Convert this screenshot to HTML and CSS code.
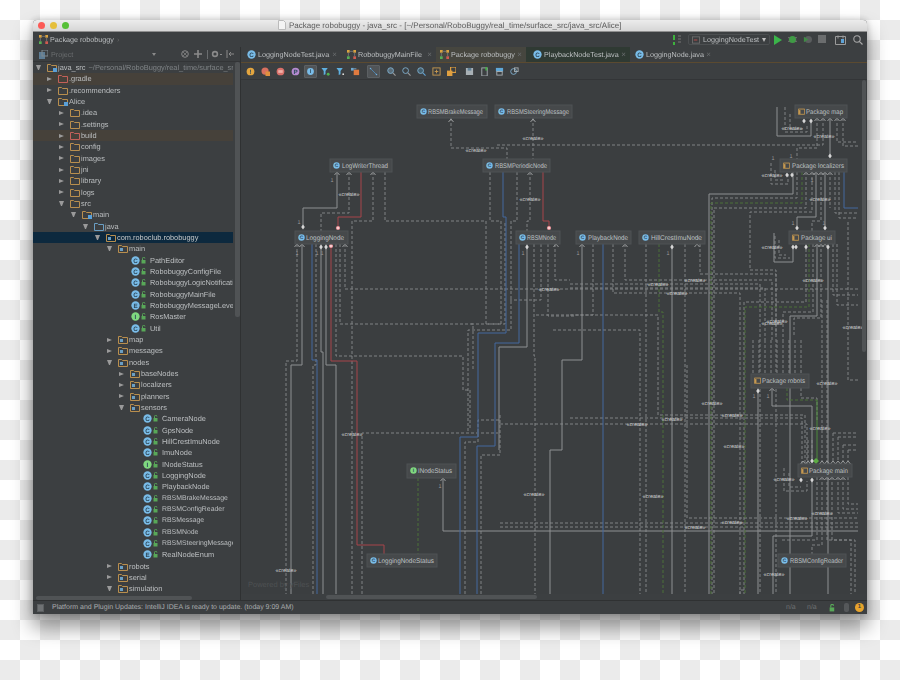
FILE: index.html
```html
<!DOCTYPE html>
<html lang="en">
<head>
<meta charset="utf-8">
<title>Package robobuggy</title>
<link rel="stylesheet" href="styles.css">
</head>
<body>
<svg class="defs" width="0" height="0" aria-hidden="true">
  <defs>
    <symbol id="folder" viewBox="0 0 10 9"><path d="M.5 1.5h3l1 1h5v6h-9z" fill="none" stroke="#b98f4e"/><rect x="2" y="4" width="3" height="3" fill="#6a9fc4"/></symbol>
    <symbol id="folder-red" viewBox="0 0 10 9"><path d="M.5 1.5h3l1 1h5v6h-9z" fill="none" stroke="#c4605a"/></symbol>
    <symbol id="folder-plain" viewBox="0 0 10 9"><path d="M.5 1.5h3l1 1h5v6h-9z" fill="none" stroke="#b98f4e"/></symbol>
    <symbol id="folder-src" viewBox="0 0 10 9"><path d="M.5 1.5h3l1 1h5v6h-9z" fill="none" stroke="#6a9fc4"/></symbol>
    <symbol id="folder-mod" viewBox="0 0 10 9"><path d="M.5 1.5h3l1 1h5v6h-9z" fill="none" stroke="#b98f4e"/><rect x="6" y="5" width="4" height="4" fill="#5aa0d8"/></symbol>
    <symbol id="cls" viewBox="0 0 10 10"><circle cx="5" cy="5" r="4.6" fill="#79bce8"/><text x="5" y="7.4" text-anchor="middle" class="gl">C</text></symbol>
    <symbol id="enm" viewBox="0 0 10 10"><circle cx="5" cy="5" r="4.6" fill="#79bce8"/><text x="5" y="7.4" text-anchor="middle" class="gl">E</text></symbol>
    <symbol id="ifc" viewBox="0 0 10 10"><circle cx="5" cy="5" r="4.6" fill="#7fd87f"/><text x="5" y="7.4" text-anchor="middle" class="gl">I</text></symbol>
    <symbol id="lock" viewBox="0 0 6 7"><rect x=".5" y="3" width="4" height="3.5" fill="#58a858"/><path d="M1.5 3V1.5a1.2 1.2 0 0 1 2.4 0" fill="none" stroke="#58a858"/></symbol>
    <symbol id="pkg" viewBox="0 0 10 9"><path d="M.5 1h9v7.5h-9z" fill="none" stroke="#c89a50" stroke-width="1.2"/><rect x="1" y="2.5" width="2.5" height="5.5" fill="#c89a50"/></symbol>
    <symbol id="graph" viewBox="0 0 10 10"><rect width="3" height="3" fill="#d9a33f"/><rect x="7" width="3" height="3" fill="#d9a33f"/><rect y="7" width="3" height="3" fill="#55b055"/><rect x="7" y="7" width="3" height="3" fill="#d05a50"/><path d="M3 1.5h4M1.5 3v4M8.5 3v4" stroke="#777"/></symbol>
    <g id="tick"><path d="M-2.5 3 0 0 2.5 3" fill="none" stroke="#9a9c9d"/></g>
    <g id="dia"><path d="M0-2.5 1.8 0 0 2.5-1.8 0z" fill="#d5d5d5"/></g>
    <g id="pin"><circle r="2.1" fill="#f09aa0"/><path d="M-1 0h2M0-1v2" stroke="#fff" stroke-width=".6"/></g>
  </defs>
</svg>

<div class="window">
  <header class="titlebar">
    <div class="lights"><i class="light l-red"></i><i class="light l-yellow"></i><i class="light l-green"></i></div>
    <div class="title"><svg class="doc" width="8" height="10" viewBox="0 0 8 10"><path d="M.5.5h5l2 2v7h-7z" fill="#f4f4f4" stroke="#bbb"/></svg><span>Package robobuggy - java_src - [~/Personal/RoboBuggy/real_time/surface_src/java_src/Alice]</span></div>
  </header>

  <nav class="navbar">
    <div class="crumb"><svg class="ic9"><use href="#graph"/></svg><span>Package robobuggy</span><b class="crumb-sep">›</b></div>
    <div class="run">
      <svg class="ic-build" width="10" height="10" viewBox="0 0 10 10"><path d="M2 0v5M2 7v3" stroke="#3db23d" stroke-width="2"/><path d="M6 1h3M6 4h3M6 7h3" stroke="#777" stroke-width="1.2"/></svg>
      <div class="runcfg"><svg width="9" height="8" viewBox="0 0 9 8"><rect x=".5" y=".5" width="8" height="7" fill="#3a3d3f" stroke="#6d6d6d"/><path d="M2 4h4" stroke="#c05050"/></svg><span>LoggingNodeTest</span><i class="caret"></i></div>
      <svg width="9" height="10" viewBox="0 0 9 10"><path d="M1 0l8 5-8 5z" fill="#3bb54a"/></svg>
      <svg width="9" height="9" viewBox="0 0 10 10"><circle cx="5" cy="5" r="4" fill="#3f9a45"/><path d="M0 3h2M0 7h2M8 3h2M8 7h2" stroke="#777"/></svg>
      <svg width="9" height="9" viewBox="0 0 10 10"><circle cx="6" cy="5" r="4" fill="#5a5d5e"/><path d="M1 2l5 3-5 3z" fill="#3f8a45"/></svg>
      <svg width="9" height="9" viewBox="0 0 9 9"><rect width="8" height="8" fill="#6b6d6e"/></svg>
      <svg class="ic-struct" width="11" height="10" viewBox="0 0 11 10"><path d="M.5 1.5h10v8H.5z" fill="none" stroke="#9a9a9a"/><path d="M3 .5v3M8 .5v3" stroke="#9a9a9a"/><rect x="6" y="4" width="3" height="4" fill="#5fa4d8"/></svg>
      <svg class="ic-search" width="10" height="10" viewBox="0 0 10 10"><circle cx="4" cy="4" r="3.2" fill="none" stroke="#a8a8a8" stroke-width="1.1"/><path d="M6.3 6.3 9.5 9.5" stroke="#a8a8a8" stroke-width="1.2"/></svg>
    </div>
  </nav>

  <div class="main">
    <aside class="sidebar">
      <div class="tool-header">
        <svg class="ic9" viewBox="0 0 9 9"><rect y="2" width="6" height="7" fill="#5d7d95"/><rect x="3" width="6" height="6" fill="none" stroke="#7f8a90"/></svg>
        <span class="tool-name">Project</span>
        <i class="tool-caret"></i>
        <div class="tool-icons">
          <svg width="8" height="8" viewBox="0 0 8 8"><circle cx="4" cy="4" r="3.3" fill="none" stroke="#8a8a8a"/><path d="M2 2l4 4M6 2 2 6" stroke="#8a8a8a" stroke-width=".7"/></svg>
          <svg width="8" height="8" viewBox="0 0 8 8"><path d="M4 0v8M0 4h8" stroke="#8a8a8a" stroke-width="1.6"/></svg>
          <i class="tool-sep"></i>
          <svg width="8" height="8" viewBox="0 0 8 8"><circle cx="4" cy="4" r="2.4" fill="none" stroke="#8a8a8a" stroke-width="1.6"/></svg>
          <i class="tool-dash"></i>
          <svg width="8" height="8" viewBox="0 0 8 8"><path d="M1 0v8M3 4h5M3 4l2-2M3 4l2 2" stroke="#8a8a8a" fill="none"/></svg>
        </div>
      </div>
      <ul class="tree">
        <li class="row l0"><i class="tw open"></i><svg class="fi"><use href="#folder-mod"/></svg><span>java_src</span><em>~/Personal/RoboBuggy/real_time/surface_src/java_src</em></li>
        <li class="row l1 hl"><i class="tw"></i><svg class="fi"><use href="#folder-red"/></svg><span>.gradle</span></li>
        <li class="row l1"><i class="tw"></i><svg class="fi"><use href="#folder-plain"/></svg><span>.recommenders</span></li>
        <li class="row l1"><i class="tw open"></i><svg class="fi"><use href="#folder-mod"/></svg><span>Alice</span></li>
        <li class="row l2"><i class="tw"></i><svg class="fi"><use href="#folder-plain"/></svg><span>.idea</span></li>
        <li class="row l2"><i class="tw"></i><svg class="fi"><use href="#folder-plain"/></svg><span>.settings</span></li>
        <li class="row l2 hl"><i class="tw"></i><svg class="fi"><use href="#folder-red"/></svg><span>build</span></li>
        <li class="row l2"><i class="tw"></i><svg class="fi"><use href="#folder-plain"/></svg><span>config</span></li>
        <li class="row l2"><i class="tw"></i><svg class="fi"><use href="#folder-plain"/></svg><span>images</span></li>
        <li class="row l2"><i class="tw"></i><svg class="fi"><use href="#folder-plain"/></svg><span>jni</span></li>
        <li class="row l2"><i class="tw"></i><svg class="fi"><use href="#folder-plain"/></svg><span>library</span></li>
        <li class="row l2"><i class="tw"></i><svg class="fi"><use href="#folder-plain"/></svg><span>logs</span></li>
        <li class="row l2"><i class="tw open"></i><svg class="fi"><use href="#folder-plain"/></svg><span>src</span></li>
        <li class="row l3"><i class="tw open"></i><svg class="fi"><use href="#folder-mod"/></svg><span>main</span></li>
        <li class="row l4"><i class="tw open"></i><svg class="fi"><use href="#folder-src"/></svg><span>java</span></li>
        <li class="row l5 sel"><i class="tw open"></i><svg class="fi"><use href="#folder"/></svg><span>com.roboclub.robobuggy</span></li>
        <li class="row l6"><i class="tw open"></i><svg class="fi"><use href="#folder"/></svg><span>main</span></li>
        <li class="row l7"><i class="tw none"></i><svg class="ci"><use href="#cls"/></svg><svg class="lk"><use href="#lock"/></svg><span>PathEditor</span></li>
        <li class="row l7"><i class="tw none"></i><svg class="ci"><use href="#cls"/></svg><svg class="lk"><use href="#lock"/></svg><span>RobobuggyConfigFile</span></li>
        <li class="row l7"><i class="tw none"></i><svg class="ci"><use href="#cls"/></svg><svg class="lk"><use href="#lock"/></svg><span>RobobuggyLogicNotification</span></li>
        <li class="row l7"><i class="tw none"></i><svg class="ci"><use href="#cls"/></svg><svg class="lk"><use href="#lock"/></svg><span>RobobuggyMainFile</span></li>
        <li class="row l7"><i class="tw none"></i><svg class="ci"><use href="#enm"/></svg><svg class="lk"><use href="#lock"/></svg><span>RobobuggyMessageLevel</span></li>
        <li class="row l7"><i class="tw none"></i><svg class="ci"><use href="#ifc"/></svg><svg class="lk"><use href="#lock"/></svg><span>RosMaster</span></li>
        <li class="row l7"><i class="tw none"></i><svg class="ci"><use href="#cls"/></svg><svg class="lk"><use href="#lock"/></svg><span>Util</span></li>
        <li class="row l6"><i class="tw"></i><svg class="fi"><use href="#folder"/></svg><span>map</span></li>
        <li class="row l6"><i class="tw"></i><svg class="fi"><use href="#folder"/></svg><span>messages</span></li>
        <li class="row l6"><i class="tw open"></i><svg class="fi"><use href="#folder"/></svg><span>nodes</span></li>
        <li class="row l7"><i class="tw"></i><svg class="fi"><use href="#folder"/></svg><span>baseNodes</span></li>
        <li class="row l7"><i class="tw"></i><svg class="fi"><use href="#folder"/></svg><span>localizers</span></li>
        <li class="row l7"><i class="tw"></i><svg class="fi"><use href="#folder"/></svg><span>planners</span></li>
        <li class="row l7"><i class="tw open"></i><svg class="fi"><use href="#folder"/></svg><span>sensors</span></li>
        <li class="row l8"><i class="tw none"></i><svg class="ci"><use href="#cls"/></svg><svg class="lk"><use href="#lock"/></svg><span>CameraNode</span></li>
        <li class="row l8"><i class="tw none"></i><svg class="ci"><use href="#cls"/></svg><svg class="lk"><use href="#lock"/></svg><span>GpsNode</span></li>
        <li class="row l8"><i class="tw none"></i><svg class="ci"><use href="#cls"/></svg><svg class="lk"><use href="#lock"/></svg><span>HillCrestImuNode</span></li>
        <li class="row l8"><i class="tw none"></i><svg class="ci"><use href="#cls"/></svg><svg class="lk"><use href="#lock"/></svg><span>ImuNode</span></li>
        <li class="row l8"><i class="tw none"></i><svg class="ci"><use href="#ifc"/></svg><svg class="lk"><use href="#lock"/></svg><span>INodeStatus</span></li>
        <li class="row l8"><i class="tw none"></i><svg class="ci"><use href="#cls"/></svg><svg class="lk"><use href="#lock"/></svg><span>LoggingNode</span></li>
        <li class="row l8"><i class="tw none"></i><svg class="ci"><use href="#cls"/></svg><svg class="lk"><use href="#lock"/></svg><span>PlaybackNode</span></li>
        <li class="row l8"><i class="tw none"></i><svg class="ci"><use href="#cls"/></svg><svg class="lk"><use href="#lock"/></svg><span class="cap">RBSMBrakeMessage</span></li>
        <li class="row l8"><i class="tw none"></i><svg class="ci"><use href="#cls"/></svg><svg class="lk"><use href="#lock"/></svg><span class="cap">RBSMConfigReader</span></li>
        <li class="row l8"><i class="tw none"></i><svg class="ci"><use href="#cls"/></svg><svg class="lk"><use href="#lock"/></svg><span class="cap">RBSMessage</span></li>
        <li class="row l8"><i class="tw none"></i><svg class="ci"><use href="#cls"/></svg><svg class="lk"><use href="#lock"/></svg><span class="cap">RBSMNode</span></li>
        <li class="row l8"><i class="tw none"></i><svg class="ci"><use href="#cls"/></svg><svg class="lk"><use href="#lock"/></svg><span class="cap">RBSMSteeringMessage</span></li>
        <li class="row l8"><i class="tw none"></i><svg class="ci"><use href="#enm"/></svg><svg class="lk"><use href="#lock"/></svg><span>RealNodeEnum</span></li>
        <li class="row l6"><i class="tw"></i><svg class="fi"><use href="#folder"/></svg><span>robots</span></li>
        <li class="row l6"><i class="tw"></i><svg class="fi"><use href="#folder"/></svg><span>serial</span></li>
        <li class="row l6"><i class="tw open"></i><svg class="fi"><use href="#folder"/></svg><span>simulation</span></li>
      </ul>
      <div class="tree-vbar"></div>
      <div class="tree-hbar"></div>
    </aside>

    <section class="editor">
      <div class="tabs">
        <div class="tab t1"><svg class="ci"><use href="#cls"/></svg><span>LoggingNodeTest.java</span><u>×</u></div>
        <div class="tab t2"><svg class="ci"><use href="#graph"/></svg><span>RobobuggyMainFile</span><u>×</u></div>
        <div class="tab t3"><svg class="ci"><use href="#graph"/></svg><span>Package robobuggy</span><u>×</u></div>
        <div class="tab t4"><svg class="ci"><use href="#cls"/></svg><span>PlaybackNodeTest.java</span><u>×</u></div>
        <div class="tab t5"><svg class="ci"><use href="#cls"/></svg><span>LoggingNode.java</span><u>×</u></div>
      </div>
      <div class="toolbar">
        <svg viewBox="0 0 10 10"><circle cx="5" cy="5" r="4.3" fill="#e3a53f"/><text x="5" y="7.5" text-anchor="middle" class="gl">!</text></svg>
        <svg viewBox="0 0 10 10"><circle cx="4.5" cy="4.5" r="4" fill="#d8705f"/><rect x="5" y="5" width="5" height="5" fill="#e0903f"/></svg>
        <svg viewBox="0 0 10 10"><circle cx="5" cy="5" r="4.3" fill="#d8706a"/><rect x="2.5" y="3.5" width="5" height="3" fill="#f0b0a8"/></svg>
        <svg viewBox="0 0 10 10"><circle cx="5" cy="5" r="4.3" fill="#b58ad0"/><text x="5" y="7.5" text-anchor="middle" class="gl">P</text></svg>
        <svg class="on" viewBox="-2 -2 14 14"><circle cx="5" cy="5" r="4.3" fill="#79bce8"/><text x="5" y="7.5" text-anchor="middle" class="gl">I</text></svg>
        <svg viewBox="0 0 10 10"><path d="M.5 1h7L5 4.5V8L3 9V4.5z" fill="#5fb0e0"/><circle cx="8" cy="8" r="1.6" fill="#4fb04f"/></svg>
        <svg viewBox="0 0 10 10"><path d="M.5 1h7L5 4.5V8L3 9V4.5z" fill="#5fb0e0"/><circle cx="8" cy="8" r="1" fill="#ddd"/></svg>
        <svg viewBox="0 0 10 10"><rect x="3" y="3" width="6" height="6" fill="#e07a3f"/><rect x="0" y="1" width="3" height="3" fill="#6fa8d0"/><path d="M3 2h3" stroke="#6fa8d0"/></svg>
        <svg class="on wide" viewBox="-2 -2 14 14"><path d="M1 1l8 8" stroke="#4f8fc0"/><circle cx="1.2" cy="1.2" r="1" fill="#6fb0e0"/><circle cx="8.8" cy="8.8" r="1" fill="#6fb0e0"/></svg>
        <svg viewBox="0 0 10 10"><circle cx="4" cy="4" r="3.2" fill="#5b6d78" stroke="#7fb0d0"/><path d="M6.5 6.5 9.5 9.5" stroke="#9a9a9a" stroke-width="1.3"/></svg>
        <svg viewBox="0 0 10 10"><circle cx="4" cy="4" r="3.2" fill="none" stroke="#7fb0d0"/><path d="M6.5 6.5 9.5 9.5" stroke="#9a9a9a" stroke-width="1.3"/></svg>
        <svg viewBox="0 0 10 10"><circle cx="4" cy="4" r="3.2" fill="#44606f" stroke="#7fb0d0"/><path d="M6.5 6.5 9.5 9.5" stroke="#5fa0d0" stroke-width="1.3"/></svg>
        <svg viewBox="0 0 10 10"><rect x="1" y="1" width="8" height="8" fill="none" stroke="#c89a50"/><path d="M3 5h4M5 3v4" stroke="#c89a50"/></svg>
        <svg class="gap" viewBox="0 0 10 10"><rect x="0" y="4" width="6" height="6" fill="#e0a040"/><rect x="4" y="0" width="6" height="6" fill="none" stroke="#e0a040" stroke-width="1.3"/></svg>
        <svg viewBox="0 0 10 10"><path d="M1 1h8v8H1z" fill="#a8b0b5"/><rect x="3" y="1" width="4" height="3" fill="#5f7f95"/></svg>
        <svg viewBox="0 0 10 10"><rect x="2" y="1" width="6" height="9" fill="none" stroke="#a8b0b5"/><path d="M7 0v4" stroke="#45b048" stroke-width="2"/></svg>
        <svg viewBox="0 0 10 10"><rect x="1" y="1" width="8" height="4" fill="#5fa8d8"/><rect x="2" y="5" width="6" height="4" fill="none" stroke="#a8b0b5"/></svg>
        <svg viewBox="0 0 10 10"><circle cx="4" cy="5" r="3.2" fill="none" stroke="#7fb0d0"/><rect x="5" y="1" width="4" height="4" fill="none" stroke="#a8b0b5"/></svg>
      </div>

      <div class="canvas">
        <svg class="diagram" viewBox="241 80 622 514">
          <g class="dash">
            <path d="M349 172V213H321V231"/>
            <path d="M373 172V221H352V594"/>
            <path d="M385 172V221H486V324H505V221"/>
            <path d="M490 172V221H501V324H470"/>
            <path d="M517 172V221H511V330H468V433"/>
            <path d="M530 172V221H527V231"/>
            <path d="M451 118V148H507V159"/>
            <path d="M533 118V159"/>
            <path d="M297 244V361H286V594"/>
            <path d="M316 244V365H313V594"/>
            <path d="M336 244V356H463V390H470V430"/>
            <path d="M340 244V324H473V370"/>
            <path d="M345 244V289H858"/>
            <path d="M362 594V433H498"/>
            <path d="M465 594V442H478V420H500"/>
            <path d="M481 594V455H500V414"/>
            <path d="M534 244V356H535V594"/>
            <path d="M541 244V300H510"/>
            <path d="M548 244V316H575"/>
            <path d="M555 244V280H570"/>
            <path d="M593 244V315H534"/>
            <path d="M553 330H640V594"/>
            <path d="M613 244V293H740V594"/>
            <path d="M625 244V280H772V340"/>
            <path d="M646 244V594"/>
            <path d="M685 244V594"/>
            <path d="M570 284H760V594"/>
            <path d="M570 288H765V340"/>
            <path d="M700 244V274H776V335"/>
            <path d="M570 315H658V415H805V464"/>
            <path d="M570 418H802V464"/>
            <path d="M500 424H807V464"/>
            <path d="M687 365V518H858"/>
            <path d="M500 523H858"/>
            <path d="M500 527H858"/>
            <path d="M817 118V148H797V159"/>
            <path d="M823 118V145H495"/>
            <path d="M837 118V142H858"/>
            <path d="M843 118V146H858"/>
            <path d="M785 107V132H807V124"/>
            <path d="M790 114V129H804"/>
            <path d="M797 172V198H712V594"/>
            <path d="M806 172V208H714V594"/>
            <path d="M812 172V212H750V270H776V594"/>
            <path d="M821 172V221H812V231"/>
            <path d="M830 172V208"/>
            <path d="M835 172V213H858"/>
            <path d="M839 172V218H858"/>
            <path d="M848 222V380H858"/>
            <path d="M771 163V184H788V172"/>
            <path d="M775 170V180H785"/>
            <path d="M806 244V302H744V594"/>
            <path d="M813 244V312H783V340"/>
            <path d="M821 244V318H794V335"/>
            <path d="M833 244V295H858"/>
            <path d="M837 244V305H858"/>
            <path d="M775 236V258H790"/>
            <path d="M779 240V255H786"/>
            <path d="M753 340V374M759 340V374M765 340V374M771 340V374M777 340V374M783 340V374M789 340V374M795 340V374M801 340V374"/>
            <path d="M801 388V398H817V420"/>
            <path d="M808 440V462M812 440V462M822 300V462M827 300V462M833 433H858M833 433V462M838 437H858M838 437V462M843 445H858M843 445V462M848 450H858M848 450V462"/>
            <path d="M784 468V491H807V481"/>
            <path d="M789 473V487H801"/>
            <path d="M817 477V540H780"/>
            <path d="M822 477V545H812V554"/>
            <path d="M827 477V540H851V594"/>
            <path d="M832 477V540H855V594"/>
            <path d="M838 477V513H858"/>
            <path d="M843 477V509H858"/>
            <path d="M848 477V504H858"/>
            <path d="M740 594V590H745"/>
          </g>
          <g class="solid">
            <path d="M337 172V208H303V228"/>
            <path d="M302 244V365H291V594"/>
            <path d="M321 244V352H323V594"/>
            <path d="M326 244V365H336V594"/>
            <path d="M527 244V347H499V450"/>
            <path d="M582 244V360H562V450H550V594"/>
            <path d="M672 244V594"/>
            <path d="M777 107V136H811V122"/>
            <path d="M830 118V155"/>
            <path d="M793 172V194H709V594"/>
            <path d="M816 172V217H797V226"/>
            <path d="M825 172V226"/>
            <path d="M817 244V316H790V594"/>
            <path d="M828 244V594"/>
            <path d="M774 233V262H793V247"/>
            <path d="M758 388V594"/>
            <path d="M772 388V406H812V462"/>
            <path d="M812 481V536H773V594"/>
            <path d="M443 478V531H858"/>
          </g>
          <g class="blue">
            <path d="M312 244V360H317V594"/>
            <path d="M503 172V217H506V333H478V437H460V594"/>
            <path d="M519 244V343H495V446H477V594"/>
            <path d="M603 244V594"/>
            <path d="M844 172V208H858"/>
          </g>
          <g class="redline">
            <path d="M361 172V217H338V228"/>
            <path d="M543 172V221H549V228"/>
            <path d="M331 244V361H357V545H384V554"/>
          </g>
          <g class="greenline">
            <path d="M418 478V554"/>
            <path d="M659 244V312H663V594"/>
            <path d="M802 172V203H711V594"/>
            <path d="M809 244V307H745V594"/>
            <path d="M787 388V400H817"/>
          </g>
          <path class="green-solid" d="M817 400V460"/>
          <path class="green-head" d="M418 473l-2.5 4.5h5z"/>
          <path class="green-head" d="M816 458l-3 3 3 3 3-3z"/>

          <use href="#tick" x="451" y="119"/><use href="#tick" x="533" y="119"/>
          <use href="#tick" x="337" y="172"/><use href="#tick" x="349" y="172"/><use href="#tick" x="373" y="172"/><use href="#tick" x="530" y="172"/>
          <use href="#tick" x="297" y="244"/><use href="#tick" x="302" y="244"/><use href="#tick" x="345" y="244"/><use href="#tick" x="556" y="244"/>
          <use href="#tick" x="582" y="244"/><use href="#tick" x="625" y="244"/><use href="#tick" x="697" y="244"/><use href="#tick" x="443" y="478"/><use href="#tick" x="772" y="388"/>
          <use href="#tick" x="817" y="118"/><use href="#tick" x="823" y="118"/><use href="#tick" x="830" y="118"/><use href="#tick" x="837" y="118"/><use href="#tick" x="843" y="118"/>
          <use href="#tick" x="806" y="172"/><use href="#tick" x="812" y="172"/><use href="#tick" x="816" y="172"/><use href="#tick" x="821" y="172"/><use href="#tick" x="825" y="172"/><use href="#tick" x="830" y="172"/>
          <use href="#tick" x="817" y="244"/><use href="#tick" x="821" y="244"/><use href="#tick" x="825" y="244"/>
          <use href="#tick" x="803" y="461"/><use href="#tick" x="808" y="461"/><use href="#tick" x="822" y="461"/><use href="#tick" x="827" y="461"/><use href="#tick" x="833" y="461"/><use href="#tick" x="838" y="461"/><use href="#tick" x="843" y="461"/><use href="#tick" x="848" y="461"/>
          <use href="#tick" x="822" y="477"/><use href="#tick" x="827" y="477"/><use href="#tick" x="832" y="477"/><use href="#tick" x="838" y="477"/><use href="#tick" x="843" y="477"/>

          <use href="#dia" x="303" y="227"/><use href="#dia" x="321" y="247"/><use href="#dia" x="326" y="247"/><use href="#dia" x="527" y="247"/><use href="#dia" x="672" y="247"/>
          <use href="#dia" x="804" y="121"/><use href="#dia" x="811" y="121"/><use href="#dia" x="830" y="156"/><use href="#dia" x="787" y="175"/><use href="#dia" x="792" y="175"/><use href="#dia" x="797" y="228"/><use href="#dia" x="825" y="228"/>
          <use href="#dia" x="793" y="247"/><use href="#dia" x="796" y="247"/><use href="#dia" x="806" y="247"/><use href="#dia" x="828" y="247"/><use href="#dia" x="758" y="391"/><use href="#dia" x="812" y="461"/><use href="#dia" x="801" y="480"/><use href="#dia" x="812" y="480"/>
          <use href="#pin" x="338" y="228"/><use href="#pin" x="549" y="228"/><use href="#pin" x="331" y="246"/>

          <g class="lbl">
            <text x="476" y="152">«create»</text><text x="533" y="140">«create»</text><text x="349" y="196">«create»</text><text x="530" y="201">«create»</text><text x="549" y="291">«create»</text>
            <text x="695" y="282">«create»</text><text x="658" y="286">«create»</text><text x="677" y="295">«create»</text><text x="813" y="282">«create»</text><text x="777" y="323">«create»</text><text x="772" y="325">«create»</text><text x="853" y="329">«create»</text>
            <text x="824" y="138">«create»</text><text x="792" y="130">«create»</text><text x="772" y="177">«create»</text><text x="820" y="201">«create»</text><text x="772" y="249">«create»</text>
            <text x="827" y="385">«create»</text><text x="712" y="405">«create»</text><text x="732" y="417">«create»</text><text x="672" y="421">«create»</text><text x="637" y="426">«create»</text><text x="820" y="430">«create»</text><text x="734" y="448">«create»</text><text x="653" y="498">«create»</text>
            <text x="784" y="481">«create»</text><text x="822" y="515">«create»</text><text x="797" y="520">«create»</text><text x="732" y="524">«create»</text><text x="695" y="529">«create»</text><text x="774" y="576">«create»</text>
            <text x="534" y="496">«create»</text><text x="352" y="436">«create»</text><text x="286" y="572">«create»</text>
          </g>
          <g class="num">
            <text x="332" y="182">1</text><text x="299" y="224">1</text><text x="297" y="255">1</text><text x="317" y="255">1</text><text x="322" y="255">1</text><text x="523" y="255">1</text><text x="578" y="255">1</text><text x="668" y="255">1</text>
            <text x="440" y="488">1</text><text x="754" y="398">1</text><text x="768" y="398">1</text><text x="791" y="158">1</text><text x="773" y="160">1</text><text x="793" y="225">1</text><text x="824" y="225">1</text><text x="812" y="182">1</text>
          </g>

          <g class="node">
            <rect x="417" y="105" width="70" height="13"/><use href="#cls" x="420" y="108" width="7" height="7"/><text x="428" y="114" textLength="55" lengthAdjust="spacingAndGlyphs">RBSMBrakeMessage</text>
            <rect x="495" y="105" width="77" height="13"/><use href="#cls" x="498" y="108" width="7" height="7"/><text x="507" y="114" textLength="62" lengthAdjust="spacingAndGlyphs">RBSMSteeringMessage</text>
            <rect x="330" y="159" width="62" height="13"/><use href="#cls" x="333" y="162" width="7" height="7"/><text x="342" y="168" textLength="46" lengthAdjust="spacingAndGlyphs">LogWriterThread</text>
            <rect x="483" y="159" width="67" height="13"/><use href="#cls" x="486" y="162" width="7" height="7"/><text x="495" y="168" textLength="52" lengthAdjust="spacingAndGlyphs">RBSMPeriodicNode</text>
            <rect x="295" y="231" width="53" height="13"/><use href="#cls" x="298" y="234" width="7" height="7"/><text x="306" y="240" textLength="38" lengthAdjust="spacingAndGlyphs">LoggingNode</text>
            <rect x="516" y="231" width="44" height="13"/><use href="#cls" x="519" y="234" width="7" height="7"/><text x="527" y="240" textLength="29" lengthAdjust="spacingAndGlyphs">RBSMNode</text>
            <rect x="576" y="231" width="55" height="13"/><use href="#cls" x="579" y="234" width="7" height="7"/><text x="588" y="240" textLength="40" lengthAdjust="spacingAndGlyphs">PlaybackNode</text>
            <rect x="639" y="231" width="66" height="13"/><use href="#cls" x="642" y="234" width="7" height="7"/><text x="651" y="240" textLength="51" lengthAdjust="spacingAndGlyphs">HillCrestImuNode</text>
            <rect x="407" y="464" width="49" height="14"/><use href="#ifc" x="410" y="467" width="7" height="7"/><text x="418" y="473" textLength="34" lengthAdjust="spacingAndGlyphs">INodeStatus</text>
            <rect x="367" y="554" width="70" height="13"/><use href="#cls" x="370" y="557" width="7" height="7"/><text x="378" y="563" textLength="56" lengthAdjust="spacingAndGlyphs">LoggingNodeStatus</text>
            <rect x="778" y="554" width="68" height="13"/><use href="#cls" x="781" y="557" width="7" height="7"/><text x="790" y="563" textLength="53" lengthAdjust="spacingAndGlyphs">RBSMConfigReader</text>
            <rect x="795" y="105" width="52" height="13"/><use href="#pkg" x="798" y="108" width="7" height="7"/><text x="806" y="114" textLength="37" lengthAdjust="spacingAndGlyphs">Package map</text>
            <rect x="780" y="159" width="67" height="13"/><use href="#pkg" x="783" y="162" width="7" height="7"/><text x="792" y="168" textLength="52" lengthAdjust="spacingAndGlyphs">Package localizers</text>
            <rect x="789" y="231" width="46" height="13"/><use href="#pkg" x="792" y="234" width="7" height="7"/><text x="801" y="240" textLength="31" lengthAdjust="spacingAndGlyphs">Package ui</text>
            <rect x="751" y="374" width="58" height="14"/><use href="#pkg" x="754" y="377" width="7" height="7"/><text x="762" y="383" textLength="43" lengthAdjust="spacingAndGlyphs">Package robots</text>
            <rect x="798" y="464" width="54" height="13"/><use href="#pkg" x="801" y="467" width="7" height="7"/><text x="809" y="473" textLength="39" lengthAdjust="spacingAndGlyphs">Package main</text>
          </g>
          <text class="powered" x="248" y="587">Powered by yFiles</text>
        </svg>
        <div class="canvas-vbar"></div>
      </div>
      <div class="canvas-hbar"><i></i></div>
    </section>
  </div>

  <footer class="status">
    <i class="status-box"></i>
    <span class="status-msg">Platform and Plugin Updates: IntelliJ IDEA is ready to update. (today 9:09 AM)</span>
    <span class="na">n/a</span>
    <span class="na">n/a</span>
    <svg class="status-lock" width="7" height="8"><use href="#lock"/></svg>
    <i class="status-mem"></i>
    <i class="status-badge">1</i>
  </footer>
</div>
</body>
</html>
```

FILE: styles.css
```css
* { box-sizing: border-box; }
html, body { margin: 0; padding: 0; height: 100%; }
body {
  width: 900px;
  height: 680px;
  overflow: hidden;
  padding: 20px 33px 0;
  font-family: "Liberation Sans", sans-serif;
  text-rendering: geometricPrecision;
  background: repeating-conic-gradient(#ebebeb 0 25%, #fff 0 50%) 0 0 / 40px 40px;
}
.defs { position: absolute; }
.gl { font: bold 7px "Liberation Sans", sans-serif; fill: #2f4a5c; }

.window {
  width: 834px;
  height: 594px;
  display: flex;
  flex-direction: column;
  background: #3c3f41;
  color: #bcbfc1;
  font-size: 7.2px;
  border-radius: 4px 4px 0 0;
  box-shadow: 0 12px 20px 1px rgba(0, 0, 0, .42), 0 0 7px rgba(0, 0, 0, .22);
  filter: blur(.4px);
  overflow: hidden;
}

.titlebar {
  height: 12px;
  flex: none;
  display: flex;
  align-items: center;
  position: relative;
  background: linear-gradient(#ececec, #d6d6d6);
  border-bottom: 1px solid #8f8f8f;
}
.lights { display: flex; gap: 5px; padding-left: 5px; }
.light { width: 7px; height: 7px; border-radius: 50%; }
.l-red { background: #fc5b57; }
.l-yellow { background: #e5bf3c; }
.l-green { background: #57c038; }
.title {
  position: absolute;
  left: 245px;
  top: 0;
  display: flex;
  align-items: center;
  gap: 3px;
  font-size: 8px;
  color: #5c5c5c;
  white-space: nowrap;
}

.navbar {
  height: 15px;
  flex: none;
  display: flex;
  align-items: center;
  justify-content: space-between;
  padding: 0 4px 0 6px;
  background: #3c3f41;
}
.crumb { display: flex; align-items: center; gap: 2px; }
.crumb-sep { color: #666; font-weight: normal; margin-left: 1px; }
.ic9 { width: 9px; height: 9px; flex: none; }
.run { display: flex; align-items: center; gap: 6px; }
.ic-struct { margin-left: 2px; }
.ic-search { margin-left: 1.5px; }
.runcfg {
  width: 82px;
  height: 11px;
  display: flex;
  align-items: center;
  gap: 3px;
  padding: 0 3px;
  border: 1px solid #4c4f51;
  border-radius: 2px;
  margin-right: -3.5px;
}
.caret {
  width: 0; height: 0;
  margin-left: auto;
  border: 2.5px solid transparent;
  border-top: 4px solid #c0c0c0;
  border-bottom: 0;
}

.main { flex: 1; min-height: 0; display: flex; }

.sidebar {
  width: 208px;
  flex: none;
  position: relative;
  display: flex;
  flex-direction: column;
  border-right: 1px solid #2f3132;
}
.tool-header {
  height: 15px;
  flex: none;
  display: flex;
  align-items: center;
  padding: 0 4px 0 6px;
  border-bottom: 1px solid #333537;
  color: #6a6d6f;
}
.tool-name { margin-left: 3px; width: 22px; }
.tool-caret {
  width: 0; height: 0;
  margin-left: 79px;
  border: 2.5px solid transparent;
  border-top: 3px solid #8a8a8a;
  border-bottom: 0;
}
.tool-icons { display: flex; align-items: center; gap: 5px; margin-left: 25px; }
.tool-sep { width: 1px; height: 9px; background: #6a6d6f; margin-right: -2px; }
.tool-dash { width: 2px; height: 1px; background: #8a8a8a; margin: 0 -1px 0 -4px; }

.tree { list-style: none; margin: 0; padding: 0; flex: 1; min-height: 0; overflow: hidden; }
.row {
  height: 11.33px;
  width: 200px;
  display: flex;
  align-items: center;
  white-space: nowrap;
  overflow: hidden;
  color: #bcbfc1;
  font-size: 7.4px;
}
.row em { margin-left: 3px; font-style: normal; color: #7f8386; }
.row .cap { font-size: 6.9px; }
.hl { background: #46413a; }
.sel { background: #0d293e; color: #c4c7c9; }
.l0 { padding-left: 3px; }
.l1 { padding-left: 14px; }
.l2 { padding-left: 26px; }
.l3 { padding-left: 38px; }
.l4 { padding-left: 50px; }
.l5 { padding-left: 62px; }
.l6 { padding-left: 74px; }
.l7 { padding-left: 86px; }
.l8 { padding-left: 98px; }
.tw {
  width: 5px; height: 0;
  flex: none;
  margin-right: 6px;
  border-left: 5px solid #9a9a9a;
  border-top: 2.5px solid transparent;
  border-bottom: 2.5px solid transparent;
}
.tw.open {
  border-left: 2.5px solid transparent;
  border-right: 2.5px solid transparent;
  border-top: 5px solid #9a9a9a;
  border-bottom: 0;
}
.tw.none { border: 0; margin-right: 7px; }
.fi { width: 10px; height: 9px; flex: none; margin-right: 1px; }
.ci { width: 9px; height: 9px; flex: none; }
.lk { width: 6px; height: 7px; flex: none; margin: 0 3px 0 1px; }
.tree-vbar {
  position: absolute;
  left: 202px;
  top: 15px;
  width: 5px;
  height: 255px;
  background: #505355;
  border-radius: 2px;
}
.tree-hbar {
  position: absolute;
  left: 3px;
  bottom: 0;
  width: 156px;
  height: 4px;
  background: #505355;
  border-radius: 2px;
}

.editor { flex: 1; min-width: 0; display: flex; flex-direction: column; }
.tabs {
  height: 16px;
  flex: none;
  display: flex;
  border-bottom: 1px solid #5b4a30;
}
.tab {
  height: 15px;
  display: flex;
  align-items: center;
  gap: 2px;
  padding-left: 6px;
  white-space: nowrap;
  position: relative;
}
.tab u { position: absolute; right: 4px; top: 3px; text-decoration: none; color: #6a6d6f; font-size: 8px; }
.t1 { width: 100px; }
.t2 { width: 95px; }
.t3 { width: 90px; padding-left: 4px; background: #46463f; }
.t4 { width: 104px; background: #2f3a33; padding-left: 7px; }
.t5 { width: 85px; padding-left: 5px; }
.toolbar {
  height: 17px;
  flex: none;
  display: flex;
  align-items: center;
  padding-left: 1.5px;
  border-bottom: 1px solid #333537;
}
.toolbar svg { width: 9px; height: 9px; margin: 0 3px; flex: none; }
.toolbar .on {
  width: 13px;
  height: 13px;
  margin: 0 1px;
  background: #505457;
  border: 1px solid #5c6063;
  border-radius: 1px;
}
.toolbar .wide { margin: 0 4px; }
.toolbar .gap { margin-right: 6px; }

.canvas { flex: 1; min-height: 0; position: relative; overflow: hidden; background: #3b3e40; }
.diagram { display: block; width: 622px; height: 514px; }
.diagram path { fill: none; }
.diagram .green-head { fill: #5cab44; }
.dash path { stroke: #808284; stroke-width: 1; stroke-dasharray: 3 2; }
.solid path { stroke: #8e9092; stroke-width: 1; }
.blue path { stroke: #44699f; stroke-width: 1; }
.redline path { stroke: #a8454a; stroke-width: 1; }
.greenline path { stroke: #4d7039; stroke-width: 1; stroke-dasharray: 3 2; }
.green-solid { stroke: #4f8a3c; stroke-width: 1; }
.lbl text { font: 5.4px "Liberation Sans", sans-serif; fill: #d0d0d0; text-anchor: middle; }
.num text { font: 5.4px "Liberation Sans", sans-serif; fill: #9a9a9a; text-anchor: middle; }
.node rect { fill: #46494b; stroke: #4f5254; }
.node text { font: 6.8px "Liberation Sans", sans-serif; fill: #bec1c3; }
.powered { font: 7.5px "Liberation Sans", sans-serif; fill: #4e5153; }
.canvas-vbar {
  position: absolute;
  right: 1px;
  top: 0;
  width: 4px;
  height: 272px;
  background: #505355;
  border-radius: 2px;
}
.canvas-hbar { height: 6px; flex: none; padding: 1px 0 0 85px; }
.canvas-hbar i { display: block; width: 211px; height: 4px; background: #505355; border-radius: 2px; }

.status {
  height: 14px;
  flex: none;
  display: flex;
  align-items: center;
  padding: 0 3px 0 4px;
  background: #3c3f41;
  border-top: 1px solid #2f3132;
  color: #a9acae;
  font-size: 7px;
}
.status-box { width: 7px; height: 8px; background: #6f7274; border: 1px solid #5c5f61; }
.status-msg { margin-left: 8px; width: 734px; flex: none; white-space: nowrap; }
.na { width: 21px; color: #6e7173; }
.status-lock { margin-left: 1px; }
.status-mem { width: 5px; height: 9px; margin-left: 8px; background: #55585a; border-radius: 2px; }
.status-badge {
  width: 9px; height: 9px;
  margin-left: 6px;
  border-radius: 50%;
  background: #e7a32c;
  color: #3c3f41;
  font: bold 6px/9px "Liberation Sans", sans-serif;
  text-align: center;
}
```
